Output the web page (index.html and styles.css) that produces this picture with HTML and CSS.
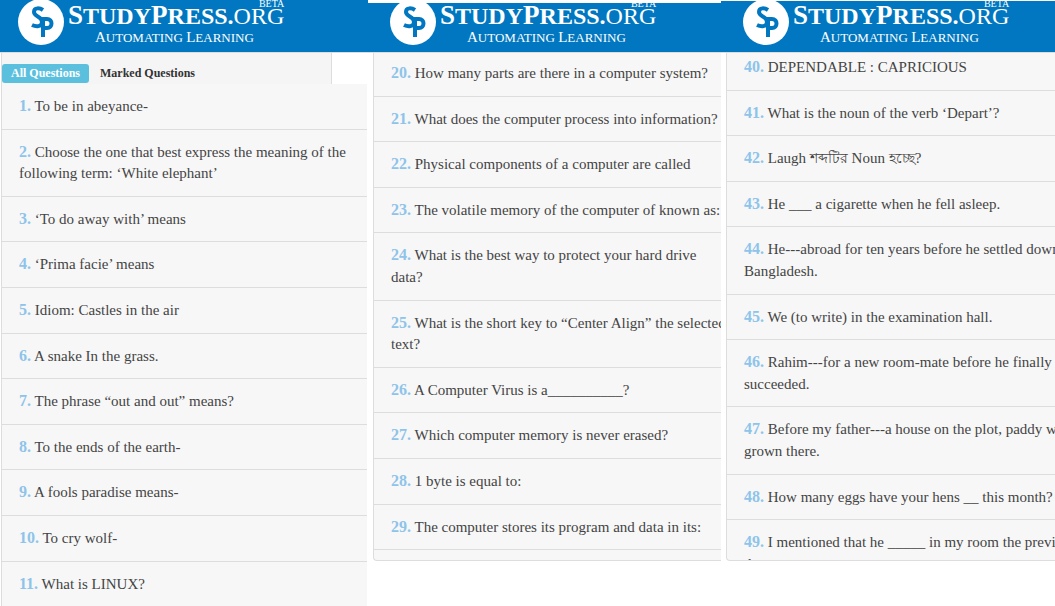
FILE: index.html
```html
<!DOCTYPE html>
<html lang="en">
<head>
<meta charset="utf-8">
<title>StudyPress.org</title>
<link rel="stylesheet" href="styles.css">
</head>
<body>
<main class="screens">
  <section class="screen">
    <header class="bar">
      <svg class="mark" viewBox="0 0 46 46" aria-hidden="true"><circle cx="23" cy="23" r="23"/><path d="M25 11C22 9 16 8 16 13C16 18 24 17 24 23C24 28 18 28 14 26M25 38V20H29C35 20 35 29 29 29H25"/></svg>
      <div class="brand">
        <div class="name"><b><span class="cap">S</span>TUDY<span class="cap">P</span>RESS.</b>ORG<sup class="beta">BETA</sup></div>
        <div class="tagline"><span class="tagcap">A</span>UTOMATING <span class="tagcap">L</span>EARNING</div>
      </div>
    </header>
    <nav class="tabs">
      <button class="tab active" type="button">All Questions</button>
      <button class="tab" type="button">Marked Questions</button>
    </nav>
    <div class="panel">
      <ol class="list">
        <li><b>1.</b> To be in abeyance-</li>
        <li><b>2.</b> Choose the one that best express the meaning of the following term: ‘White elephant’</li>
        <li><b>3.</b> ‘To do away with’ means</li>
        <li><b>4.</b> ‘Prima facie’ means</li>
        <li><b>5.</b> Idiom: Castles in the air</li>
        <li><b>6.</b> A snake In the grass.</li>
        <li><b>7.</b> The phrase “out and out” means?</li>
        <li><b>8.</b> To the ends of the earth-</li>
        <li><b>9.</b> A fools paradise means-</li>
        <li><b>10.</b> To cry wolf-</li>
        <li><b>11.</b> What is LINUX?</li>
      </ol>
    </div>
  </section>
  <section class="screen middle">
    <header class="bar">
      <svg class="mark" viewBox="0 0 46 46" aria-hidden="true"><circle cx="23" cy="23" r="23"/><path d="M25 11C22 9 16 8 16 13C16 18 24 17 24 23C24 28 18 28 14 26M25 38V20H29C35 20 35 29 29 29H25"/></svg>
      <div class="brand">
        <div class="name"><b><span class="cap">S</span>TUDY<span class="cap">P</span>RESS.</b>ORG<sup class="beta">BETA</sup></div>
        <div class="tagline"><span class="tagcap">A</span>UTOMATING <span class="tagcap">L</span>EARNING</div>
      </div>
    </header>
    <div class="panel">
      <ol class="list">
        <li><b>20.</b> How many parts are there in a computer system?</li>
        <li><b>21.</b> What does the computer process into information?</li>
        <li><b>22.</b> Physical components of a computer are called</li>
        <li><b>23.</b> The volatile memory of the computer of known as:</li>
        <li><b>24.</b> What is the best way to protect your hard drive data?</li>
        <li><b>25.</b> What is the short key to “Center Align” the selected text?</li>
        <li><b>26.</b> A Computer Virus is a__________?</li>
        <li><b>27.</b> Which computer memory is never erased?</li>
        <li><b>28.</b> 1 byte is equal to:</li>
        <li><b>29.</b> The computer stores its program and data in its:</li>
      </ol>
    </div>
  </section>
  <section class="screen last">
    <header class="bar">
      <svg class="mark" viewBox="0 0 46 46" aria-hidden="true"><circle cx="23" cy="23" r="23"/><path d="M25 11C22 9 16 8 16 13C16 18 24 17 24 23C24 28 18 28 14 26M25 38V20H29C35 20 35 29 29 29H25"/></svg>
      <div class="brand">
        <div class="name"><b><span class="cap">S</span>TUDY<span class="cap">P</span>RESS.</b>ORG<sup class="beta">BETA</sup></div>
        <div class="tagline"><span class="tagcap">A</span>UTOMATING <span class="tagcap">L</span>EARNING</div>
      </div>
    </header>
    <div class="panel">
      <ol class="list">
        <li><b>40.</b> DEPENDABLE : CAPRICIOUS</li>
        <li><b>41.</b> What is the noun of the verb ‘Depart’?</li>
        <li><b>42.</b> Laugh <span class="bangla" lang="bn">শব্দটির</span> Noun <span class="bangla" lang="bn">হচ্ছে</span>?</li>
        <li><b>43.</b> He ___ a cigarette when he fell asleep.</li>
        <li><b>44.</b> He---abroad for ten years before he settled down in Bangladesh.</li>
        <li><b>45.</b> We (to write) in the examination hall.</li>
        <li><b>46.</b> Rahim---for a new room-mate before he finally succeeded.</li>
        <li><b>47.</b> Before my father---a house on the plot, paddy was grown there.</li>
        <li><b>48.</b> How many eggs have your hens __ this month?</li>
        <li><b>49.</b> I mentioned that he _____ in my room the previous day.</li>
      </ol>
    </div>
  </section>
</main>
</body>
</html>
```
FILE: styles.css
```css
* { box-sizing: border-box; }
body {
  margin: 0;
  background: #fff;
  color: #444;
  font: 15px/1.44 "Liberation Serif", "Times New Roman", serif;
}
.screens {
  display: grid;
  grid-template-columns: 368fr 353fr 334fr;
  height: 100vh;
  overflow: hidden;
}
.screen {
  display: flex;
  flex-direction: column;
  min-width: 0;
  min-height: 0;
}

.bar {
  position: relative;
  z-index: 1;
  flex: none;
  display: flex;
  align-items: flex-end;
  gap: 4px;
  height: 52px;
  padding: 0 0 7px 18px;
  overflow: hidden;
  background: #0077c0;
  color: #fff;
  box-shadow: 0 1px 0 #ddd;
}
.middle .bar { height: 49px; margin-top: 3px; padding-left: 22px; }
.last .bar { height: 51px; margin-top: 1px; padding-left: 22px; }
.mark { flex: none; width: 46px; height: 46px; }
.mark circle { fill: #fff; }
.mark path { fill: none; stroke: #0077c0; stroke-width: 4; }
.brand { flex: none; position: relative; white-space: nowrap; }
.name { font-size: 24px; line-height: 26px; }
.cap { font-size: 27px; line-height: 26px; }
.beta {
  position: absolute;
  right: 0;
  top: -4px;
  font-size: 10px;
  line-height: 12px;
}
.tagline { padding: 1px 0 0 27px; font-size: 13px; line-height: 14px; }
.tagcap { font-size: 15px; line-height: 14px; }

.tabs {
  flex: none;
  display: flex;
  align-items: flex-end;
  width: 90%;
  height: 32px;
  margin-left: 1px;
  background: #f5f5f5;
  border-left: 1px solid #ddd;
  border-right: 1px solid #ddd;
}
.tab {
  height: 19px;
  margin: 0 2px 1px 0;
  padding: 0 9px;
  border: 0;
  border-radius: 3px;
  background: transparent;
  color: #333;
  font: bold 12px/19px "Liberation Serif", serif;
}
.tab.active { background: #5bc0de; color: #fff; }

.panel {
  flex: 1;
  min-height: 0;
  margin: 0 1px;
  overflow: hidden;
  background: #f7f7f7;
  border-left: 1px solid #ddd;
}
.middle .panel, .last .panel {
  margin: 0 0 45px 5px;
  border-bottom: 1px solid #ddd;
  border-bottom-left-radius: 4px;
}
.list { margin: 0; padding: 0; list-style: none; }
.middle .list { margin-top: -1px; }
.last .list { margin-top: -7px; }
.list li {
  min-width: 364px;
  padding: 12px 7px 11px 17px;
  border-bottom: 1px solid #ddd;
}
.list b { color: #8ec4ea; font-size: 16px; line-height: 1; }
.bangla { font-size: 14px; line-height: 1; }
```
